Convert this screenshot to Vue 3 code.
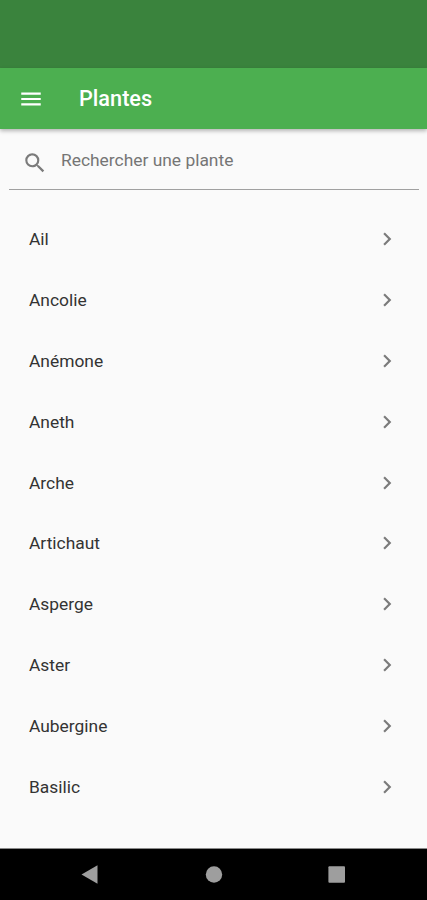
<template>
  <div class="app">
    <div class="status-bar"></div>
    <header class="toolbar">
      <button type="button" class="icon-btn" aria-label="Menu">
        <svg class="icon" viewBox="0 0 24 24"><path d="M3 18h18v-2H3v2zm0-5h18v-2H3v2zm0-7v2h18V6H3z" /></svg>
      </button>
      <h1>Plantes</h1>
    </header>
    <main class="content">
      <div class="search">
        <svg class="icon search-icon" viewBox="0 0 24 24">
          <path d="M15.5 14h-.79l-.28-.27A6.471 6.471 0 0 0 16 9.5 6.5 6.5 0 1 0 9.5 16c1.61 0 3.09-.59 4.23-1.57l.27.28v.79l5 4.99L20.49 19l-4.99-5zm-6 0C7.01 14 5 11.99 5 9.5S7.01 5 9.5 5 14 7.01 14 9.5 11.99 14 9.5 14z" />
        </svg>
        <input type="text" v-model="search" placeholder="Rechercher une plante">
      </div>
      <ul class="plant-list">
        <li v-for="plant in filteredPlants" :key="plant" class="plant-item">
          <span>{{ plant }}</span>
          <svg class="icon" viewBox="0 0 24 24"><path d="M10 6L8.59 7.41 13.17 12l-4.58 4.59L10 18l6-6z" /></svg>
        </li>
      </ul>
    </main>
    <nav class="nav-bar">
      <svg viewBox="0 0 20 20"><path d="M1.5 9.5L17.5.3v18.4z" /></svg>
      <svg viewBox="0 0 20 20"><circle cx="10" cy="9.5" r="8.2" /></svg>
      <svg viewBox="0 0 20 20"><rect x="1.4" y="1.2" width="16.6" height="16.6" rx="1" /></svg>
    </nav>
  </div>
</template>

<script setup>
import { ref, computed } from 'vue';

const search = ref('');

const plants = [
  'Ail',
  'Ancolie',
  'Anémone',
  'Aneth',
  'Arche',
  'Artichaut',
  'Asperge',
  'Aster',
  'Aubergine',
  'Basilic'
];

const filteredPlants = computed(() =>
  plants.filter((plant) => plant.toLowerCase().includes(search.value.toLowerCase()))
);
</script>

<style>
body {
  margin: 0;
  background-color: #fafafa;
}
</style>

<style scoped>
.app {
  display: flex;
  flex-direction: column;
  height: 100vh;
  overflow: hidden;
  background-color: #fafafa;
  font-family: Roboto, sans-serif;
  color: #333;
}

.icon {
  display: block;
  flex-shrink: 0;
  width: 26px;
  height: 26px;
  fill: currentColor;
}

/* Top bars */
.status-bar {
  flex-shrink: 0;
  height: 68px;
  background-color: #3a833d;
}

.toolbar {
  display: flex;
  flex-shrink: 0;
  align-items: center;
  height: 61px;
  padding-left: 18px;
  background-color: #4caf50;
  color: #fff;
  box-shadow: 0 2px 4px rgba(0, 0, 0, 0.28);
}

.icon-btn {
  padding: 0;
  border: none;
  background: none;
  color: inherit;
  cursor: pointer;
}

h1 {
  margin: 0 0 0 35px;
  padding-top: 1px;
  font-size: 21.7px;
  font-weight: 500;
  line-height: 26px;
}

/* Search and list */
.content {
  flex: 1;
  min-height: 0;
}

.search {
  display: flex;
  box-sizing: border-box;
  height: 61px;
  margin: 0 8px 0 9px;
  padding: 20px 0 0 13px;
  border-bottom: 1px solid #a0a0a0;
  color: #7b7b7b;
}

.search-icon {
  margin-top: 1.4px;
}

input {
  flex: 1;
  height: 22px;
  margin-left: 13px;
  padding: 0;
  border: none;
  outline: none;
  background: none;
  font-family: inherit;
  font-size: 17.4px;
  color: #333;
}

input::placeholder {
  color: #757575;
  opacity: 1;
}

.plant-list {
  margin: 19px 0 0;
  padding: 0;
  list-style: none;
}

.plant-item {
  display: flex;
  align-items: center;
  justify-content: space-between;
  height: 60.8px;
  padding: 0 27.5px 0 29px;
  font-size: 17.4px;
}

.plant-item .icon {
  color: #7b7b7b;
}

/* System navigation */
.nav-bar {
  display: flex;
  flex-shrink: 0;
  align-items: center;
  justify-content: space-between;
  box-sizing: border-box;
  height: 52px;
  padding: 0 80px;
  border-top: 1px solid #8a8a8a;
  background-color: #000;
}

.nav-bar svg {
  width: 20px;
  height: 20px;
  fill: #9e9e9e;
}
</style>
